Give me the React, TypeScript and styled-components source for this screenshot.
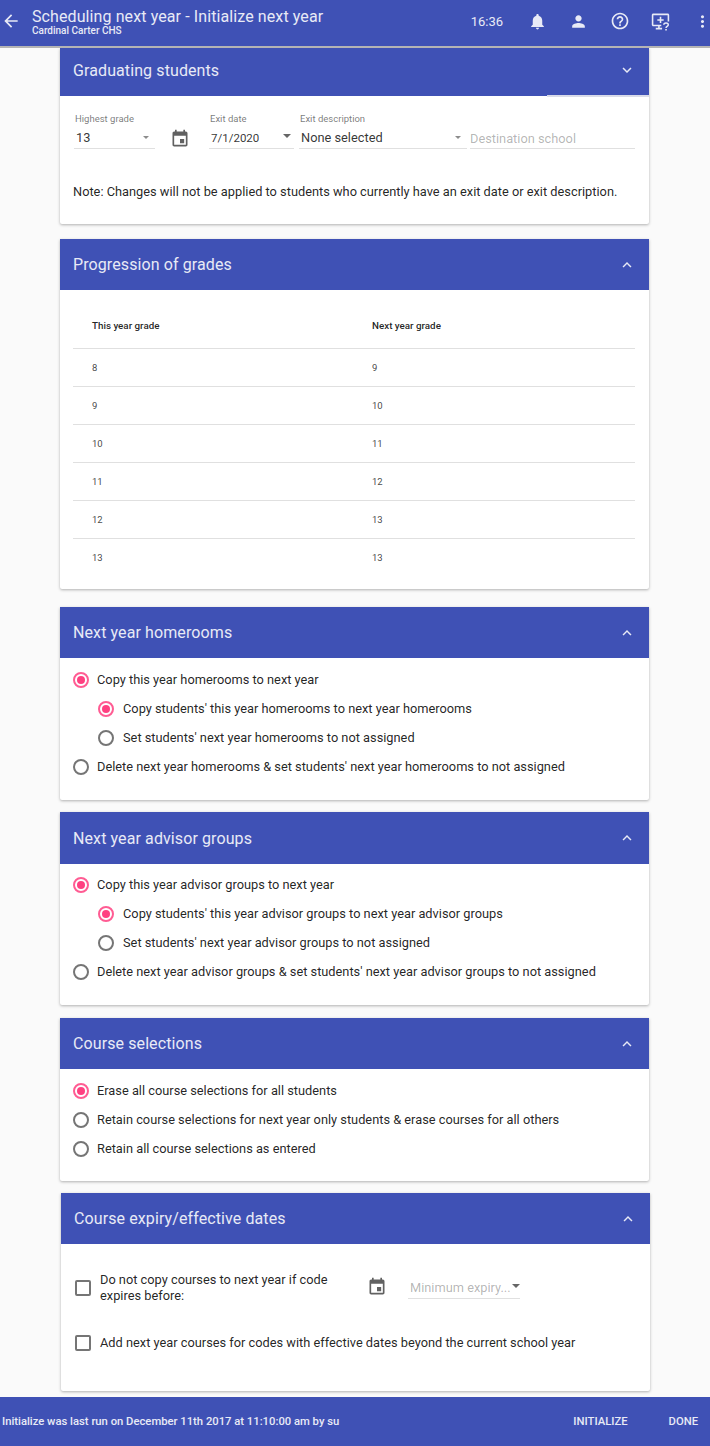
import React from "react";
import styled, { createGlobalStyle } from "styled-components";

const INDIGO = "#3f51b5";

const GlobalStyle = createGlobalStyle`
  html, body {
    margin: 0;
    padding: 0;
    height: 100%;
    overflow: hidden;
    background: #fafafa;
    font-family: Roboto, "Liberation Sans", sans-serif;
    color: rgba(0, 0, 0, 0.87);
  }
`;

const paths = {
  back: "M20 11H7.83l5.59-5.59L12 4l-8 8 8 8 1.41-1.41L7.83 13H20v-2z",
  bell: "M12 22c1.1 0 2-.9 2-2h-4c0 1.1.89 2 2 2zm6-6v-5c0-3.07-1.64-5.64-4.5-6.32V4c0-.83-.67-1.5-1.5-1.5s-1.5.67-1.5 1.5v.68C7.63 5.36 6 7.92 6 11v5l-2 2v1h16v-1l-2-2z",
  person: "M12 12c2.21 0 4-1.79 4-4s-1.79-4-4-4-4 1.79-4 4 1.79 4 4 4zm0 2c-2.67 0-8 1.34-8 4v2h16v-2c0-2.66-5.33-4-8-4z",
  help: "M11 18h2v-2h-2v2zm1-16C6.48 2 2 6.48 2 12s4.48 10 10 10 10-4.48 10-10S17.52 2 12 2zm0 18c-4.41 0-8-3.59-8-8s3.59-8 8-8 8 3.59 8 8-3.59 8-8 8zm0-14c-2.21 0-4 1.79-4 4h2c0-1.1.9-2 2-2s2 .9 2 2c0 2-3 1.75-3 5h2c0-2.25 3-2.5 3-5 0-2.21-1.79-4-4-4z",
  more: "M12 8c1.1 0 2-.9 2-2s-.9-2-2-2-2 .9-2 2 .9 2 2 2zm0 2c-1.1 0-2 .9-2 2s.9 2 2 2 2-.9 2-2-.9-2-2-2zm0 6c-1.1 0-2 .9-2 2s.9 2 2 2 2-.9 2-2-.9-2-2-2z",
  event: "M17 12h-5v5h5v-5zM16 1v2H8V1H6v2H5c-1.11 0-1.99.9-1.99 2L3 19c0 1.1.89 2 2 2h14c1.1 0 2-.9 2-2V5c0-1.1-.9-2-2-2h-1V1h-2zm3 18H5V8h14v11z",
  expand: "M7.41 8.59 12 13.17l4.59-4.58L18 10l-6 6-6-6z",
  collapse: "M12 8l-6 6 1.41 1.41L12 10.83l4.59 4.58L18 14z",
};

function Icon({ name, size = 24, color = "currentColor" }: { name: keyof typeof paths; size?: number; color?: string }) {
  return (
    <svg width={size} height={size} viewBox="0 0 24 24" fill={color} style={{ display: "block", flex: "none" }}>
      <path d={paths[name]} />
    </svg>
  );
}

function MonitorHelp() {
  return (
    <svg width="19" height="19" viewBox="0 0 24 24" style={{ display: "block" }}>
      <path
        fill="#e8eaf6"
        d="M3 2h18c1.1 0 2 .9 2 2v8h-2V4H3v12h10v2h-2v2h3v2H6v-2h3v-2H3c-1.1 0-2-.9-2-2V4c0-1.1.9-2 2-2z"
      />
      <path fill="#e8eaf6" d="M11 6h2v3h3v2h-3v3h-2v-3H8V9h3z" />
      <path
        fill="none"
        stroke="#e8eaf6"
        strokeWidth="1.9"
        d="M16.2 16.2c0-3 5.6-3 5.6-.2 0 2.3-2.8 2-2.8 4.2"
      />
      <path fill="#e8eaf6" d="M18 21.4h2v2h-2z" />
    </svg>
  );
}

const Page = styled.div`
  height: 1446px;
  display: flex;
  flex-direction: column;
  overflow: hidden;
`;

const TopBar = styled.header`
  flex: none;
  box-sizing: border-box;
  height: 48px;
  padding-bottom: 4px;
  display: flex;
  align-items: center;
  background: ${INDIGO};
  color: #e8eaf6;
  border-bottom: 2px solid #b4b4b4;
`;

const BackButton = styled.div`
  width: 32px;
  padding-left: 1px;
  box-sizing: border-box;
`;

const TitleBlock = styled.div`
  flex: 1;
`;

const AppTitle = styled.div`
  font-size: 16px;
  line-height: 19px;
  letter-spacing: 0.1px;
`;

const AppSubtitle = styled.div`
  font-size: 10px;
  line-height: 10px;
  font-weight: 500;
`;

const Clock = styled.div`
  font-size: 13px;
  margin-right: 14px;
`;

const ActionIcon = styled.div`
  width: 41px;
  display: flex;
  justify-content: center;
`;

const MoreIcon = styled.div`
  width: 20px;
  margin-left: 11px;
  margin-right: -2px;
  display: flex;
  justify-content: center;
`;

const Content = styled.main`
  flex: 1;
  min-height: 0;
  padding-left: 60px;
  overflow: hidden;
`;

const Card = styled.section<{ $top: number; $height: number; $shift?: number }>`
  box-sizing: border-box;
  width: 589px;
  height: ${(p) => p.$height}px;
  margin-top: ${(p) => p.$top}px;
  margin-left: ${(p) => p.$shift ?? 0}px;
  background: #fff;
  border-radius: 0 0 2px 2px;
  box-shadow: 0 1px 3px rgba(0, 0, 0, 0.3);
`;

const CardHeader = styled.div<{ $height: number; $lift?: number }>`
  position: relative;
  box-sizing: border-box;
  height: ${(p) => p.$height}px;
  padding: 0 13px ${(p) => p.$lift ?? 0}px;
  display: flex;
  align-items: center;
  justify-content: space-between;
  background: ${INDIGO};
  color: #e8eaf6;
  font-size: 16px;
  letter-spacing: 0.1px;
`;

const InkBar = styled.div`
  position: absolute;
  right: 0;
  bottom: -1px;
  width: 102px;
  height: 2px;
  background: #d9dbe9;
`;

const FieldRow = styled.div`
  display: flex;
  align-items: flex-end;
  padding: 17px 14px 0 14px;
`;

const Field = styled.div<{ $width: number; $gap?: number }>`
  flex: none;
  width: ${(p) => p.$width}px;
  margin-right: ${(p) => p.$gap ?? 0}px;
`;

const FieldLabel = styled.div`
  font-size: 9.5px;
  line-height: 11px;
  color: rgba(0, 0, 0, 0.54);
  padding-left: 1px;
  margin-bottom: 4px;
`;

const FieldValue = styled.div<{ $muted?: boolean; $small?: boolean; $flush?: boolean }>`
  position: relative;
  height: 20px;
  font-size: ${(p) => (p.$small ? 11.5 : 12.8)}px;
  line-height: ${(p) => (p.$flush ? 22 : 20)}px;
  padding-left: ${(p) => (p.$flush ? 0 : 2)}px;
  border-bottom: 1px solid #e0e0e0;
  color: ${(p) => (p.$muted ? "rgba(0, 0, 0, 0.3)" : "rgba(0, 0, 0, 0.8)")};
  white-space: nowrap;
`;

const Caret = styled.span<{ $right: number; $faint?: boolean }>`
  position: absolute;
  right: ${(p) => p.$right}px;
  top: ${(p) => (p.$faint ? 8 : 6)}px;
  width: 0;
  height: 0;
  border-left: ${(p) => (p.$faint ? 3.5 : 4)}px solid transparent;
  border-right: ${(p) => (p.$faint ? 3.5 : 4)}px solid transparent;
  border-top: ${(p) => (p.$faint ? "3.5px solid rgba(0, 0, 0, 0.45)" : "4px solid rgba(0, 0, 0, 0.6)")};
`;

const CalendarSlot = styled.div`
  flex: none;
  width: 54px;
  display: flex;
  padding-left: 15px;
  box-sizing: border-box;
  color: #616161;
`;

const Note = styled.p`
  margin: 34px 0 0 13px;
  font-size: 12.8px;
  line-height: 18px;
  color: rgba(0, 0, 0, 0.87);
`;

const GradeTable = styled.table`
  width: 562px;
  margin: 16px 0 0 13px;
  border-collapse: collapse;
  table-layout: fixed;
`;

const HeadCell = styled.th`
  height: 38px;
  padding: 0 0 4px 19px;
  font-size: 9.8px;
  font-weight: 500;
  text-align: left;
  border-bottom: 1px solid #e0e0e0;
  color: rgba(0, 0, 0, 0.87);

  &:first-child {
    width: 280px;
    box-sizing: border-box;
  }
`;

const GradeCell = styled.td<{ $last?: boolean }>`
  height: 37px;
  padding: 0 0 0 19px;
  font-size: 9.5px;
  border-bottom: ${(p) => (p.$last ? "none" : "1px solid #e0e0e0")};
  color: rgba(0, 0, 0, 0.75);
`;

const OptionList = styled.div<{ $top: number }>`
  display: flex;
  flex-direction: column;
  padding: ${(p) => p.$top}px 13px 0;
`;

const OptionRow = styled.label<{ $nested?: boolean }>`
  display: flex;
  align-items: center;
  height: 29px;
  gap: ${(p) => (p.$nested ? 9 : 8)}px;
  padding-left: ${(p) => (p.$nested ? 25 : 0)}px;
  font-size: 12.8px;
  color: rgba(0, 0, 0, 0.87);
`;

const RadioCircle = styled.span<{ $on?: boolean }>`
  flex: none;
  position: relative;
  width: 16px;
  height: 16px;
  box-sizing: border-box;
  border-radius: 50%;
  border: 2px solid ${(p) => (p.$on ? "#ff5c93" : "#757575")};

  &::after {
    content: "";
    display: ${(p) => (p.$on ? "block" : "none")};
    position: absolute;
    inset: 2px;
    border-radius: 50%;
    background: #ff4081;
  }
`;

const CheckBox = styled.span`
  flex: none;
  width: 16px;
  height: 16px;
  box-sizing: border-box;
  border: 2px solid #757575;
  border-radius: 2px;
`;

const ExpiryRow = styled.div<{ $top: number }>`
  display: flex;
  align-items: center;
  padding: ${(p) => p.$top}px 0 0 14px;
`;

const CheckLabel = styled.span<{ $width?: number }>`
  margin-left: 9px;
  width: ${(p) => (p.$width ? `${p.$width}px` : "auto")};
  font-size: 12.8px;
  line-height: 16px;
  color: rgba(0, 0, 0, 0.87);
`;

const ExpiryCalendar = styled.div`
  flex: none;
  margin: -2px 21px 0 29px;
  color: #616161;
`;

const BottomBar = styled.footer`
  flex: none;
  height: 49px;
  display: flex;
  align-items: center;
  padding-left: 2px;
  background: ${INDIGO};
  color: #e8eaf6;
  font-size: 11.25px;
  font-weight: 500;
`;

const LastRun = styled.div`
  flex: 1;
`;

const FooterAction = styled.div<{ $gap: number }>`
  margin-right: ${(p) => p.$gap}px;
`;

const grades = [
  ["8", "9"],
  ["9", "10"],
  ["10", "11"],
  ["11", "12"],
  ["12", "13"],
  ["13", "13"],
];

type Option = { label: string; on?: boolean; nested?: boolean };

const homerooms: Option[] = [
  { label: "Copy this year homerooms to next year", on: true },
  { label: "Copy students' this year homerooms to next year homerooms", on: true, nested: true },
  { label: "Set students' next year homerooms to not assigned", nested: true },
  { label: "Delete next year homerooms & set students' next year homerooms to not assigned" },
];

const advisors: Option[] = [
  { label: "Copy this year advisor groups to next year", on: true },
  { label: "Copy students' this year advisor groups to next year advisor groups", on: true, nested: true },
  { label: "Set students' next year advisor groups to not assigned", nested: true },
  { label: "Delete next year advisor groups & set students' next year advisor groups to not assigned" },
];

const courses: Option[] = [
  { label: "Erase all course selections for all students", on: true },
  { label: "Retain course selections for next year only students & erase courses for all others" },
  { label: "Retain all course selections as entered" },
];

function Options({ items, top }: { items: Option[]; top: number }) {
  return (
    <OptionList $top={top}>
      {items.map((o) => (
        <OptionRow key={o.label} $nested={o.nested}>
          <RadioCircle $on={o.on} />
          {o.label}
        </OptionRow>
      ))}
    </OptionList>
  );
}

export default function App() {
  return (
    <Page>
      <GlobalStyle />
      <TopBar>
        <BackButton>
          <Icon name="back" size={20} />
        </BackButton>
        <TitleBlock>
          <AppTitle>Scheduling next year - Initialize next year</AppTitle>
          <AppSubtitle>Cardinal Carter CHS</AppSubtitle>
        </TitleBlock>
        <Clock>16:36</Clock>
        <ActionIcon>
          <Icon name="bell" size={19} />
        </ActionIcon>
        <ActionIcon>
          <Icon name="person" size={19} />
        </ActionIcon>
        <ActionIcon>
          <Icon name="help" size={20} />
        </ActionIcon>
        <ActionIcon>
          <MonitorHelp />
        </ActionIcon>
        <MoreIcon>
          <Icon name="more" size={19} />
        </MoreIcon>
      </TopBar>

      <Content>
        <Card $top={0} $height={176}>
          <CardHeader $height={48} $lift={4}>
            Graduating students
            <Icon name="expand" size={18} />
            <InkBar />
          </CardHeader>
          <FieldRow>
            <Field $width={81}>
              <FieldLabel>Highest grade</FieldLabel>
              <FieldValue>
                13
                <Caret $right={6} $faint />
              </FieldValue>
            </Field>
            <CalendarSlot>
              <Icon name="event" size={20} />
            </CalendarSlot>
            <Field $width={85} $gap={5}>
              <FieldLabel>Exit date</FieldLabel>
              <FieldValue $small>
                7/1/2020
                <Caret $right={3} />
              </FieldValue>
            </Field>
            <Field $width={168} $gap={3}>
              <FieldLabel>Exit description</FieldLabel>
              <FieldValue>
                None selected
                <Caret $right={6} $faint />
              </FieldValue>
            </Field>
            <Field $width={165}>
              <FieldValue $muted $flush>
                Destination school
              </FieldValue>
            </Field>
          </FieldRow>
          <Note>Note: Changes will not be applied to students who currently have an exit date or exit description.</Note>
        </Card>

        <Card $top={15} $height={350}>
          <CardHeader $height={51}>
            Progression of grades
            <Icon name="collapse" size={18} />
          </CardHeader>
          <GradeTable>
            <thead>
              <tr>
                <HeadCell>This year grade</HeadCell>
                <HeadCell>Next year grade</HeadCell>
              </tr>
            </thead>
            <tbody>
              {grades.map(([a, b], i) => (
                <tr key={a}>
                  <GradeCell $last={i === grades.length - 1}>{a}</GradeCell>
                  <GradeCell $last={i === grades.length - 1}>{b}</GradeCell>
                </tr>
              ))}
            </tbody>
          </GradeTable>
        </Card>

        <Card $top={18} $height={193}>
          <CardHeader $height={51}>
            Next year homerooms
            <Icon name="collapse" size={18} />
          </CardHeader>
          <Options items={homerooms} top={7} />
        </Card>

        <Card $top={12} $height={193}>
          <CardHeader $height={52}>
            Next year advisor groups
            <Icon name="collapse" size={18} />
          </CardHeader>
          <Options items={advisors} top={6} />
        </Card>

        <Card $top={13} $height={163}>
          <CardHeader $height={51}>
            Course selections
            <Icon name="collapse" size={18} />
          </CardHeader>
          <Options items={courses} top={7} />
        </Card>

        <Card $top={12} $height={198} $shift={1}>
          <CardHeader $height={51}>
            Course expiry/effective dates
            <Icon name="collapse" size={18} />
          </CardHeader>
          <ExpiryRow $top={28}>
            <CheckBox />
            <CheckLabel $width={238}>Do not copy courses to next year if code expires before:</CheckLabel>
            <ExpiryCalendar>
              <Icon name="event" size={20} />
            </ExpiryCalendar>
            <Field $width={112}>
              <FieldValue $muted>
                Minimum expiry...
                <Caret $right={0} />
              </FieldValue>
            </Field>
          </ExpiryRow>
          <ExpiryRow $top={31}>
            <CheckBox />
            <CheckLabel>Add next year courses for codes with effective dates beyond the current school year</CheckLabel>
          </ExpiryRow>
        </Card>
      </Content>

      <BottomBar>
        <LastRun>Initialize was last run on December 11th 2017 at 11:10:00 am by su</LastRun>
        <FooterAction $gap={41}>INITIALIZE</FooterAction>
        <FooterAction $gap={12}>DONE</FooterAction>
      </BottomBar>
    </Page>
  );
}
